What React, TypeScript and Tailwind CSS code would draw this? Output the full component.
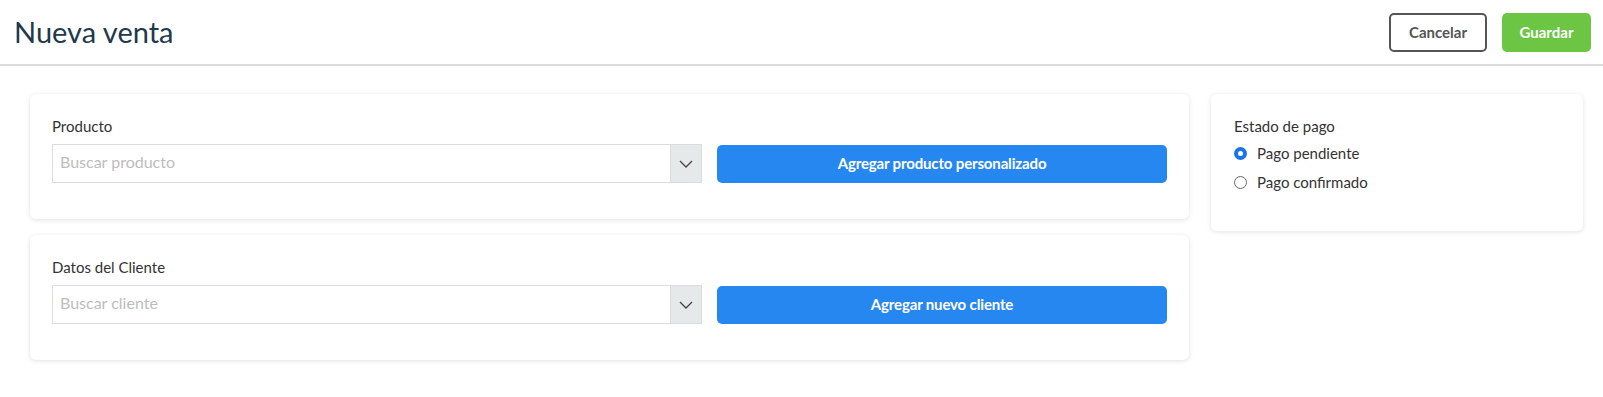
import { type ReactNode } from 'react'

function Card({ children, className = '' }: { children: ReactNode; className?: string }) {
  return (
    <div className={`bg-white rounded-md shadow-[0_1px_5px_rgba(0,0,0,0.12)] ${className}`}>
      {children}
    </div>
  )
}

// Buscador con flecha a la derecha (estilo select)
function SearchSelect({ placeholder }: { placeholder: string }) {
  return (
    <div className="flex h-[39px] border border-[#dcdcdc] bg-white">
      <div className="flex-1 flex items-center pl-[7px] pb-[3px] text-[16px] text-[#bdbdbd]">{placeholder}</div>
      <div className="w-[31px] flex items-center justify-center bg-[#e6e9e9] border-l border-[#dcdcdc]">
        <svg width="14" height="8" viewBox="0 0 14 8" fill="none" aria-hidden="true">
          <path d="M1 1l6 6 6-6" stroke="#444" strokeWidth="1.3" />
        </svg>
      </div>
    </div>
  )
}

function FieldRow({ label, placeholder, action }: { label: string; placeholder: string; action: string }) {
  return (
    <Card className="pt-[23px] pb-[36px] px-[22px]">
      <div className="text-[15px] leading-[18px] text-[#333]">{label}</div>
      <div className="mt-[9px] grid grid-cols-[650px_1fr] gap-[15px] items-center">
        <SearchSelect placeholder={placeholder} />
        <button
          type="button"
          className="h-[38px] rounded-[5px] bg-[#2787f0] text-white text-[15px] font-bold tracking-[-0.01em]"
        >
          {action}
        </button>
      </div>
    </Card>
  )
}

function Radio({ checked, label }: { checked?: boolean; label: string }) {
  return (
    <label className="flex items-center gap-[10px] h-[29px] text-[15px] text-[#333]">
      {checked ? (
        <span className="w-[13px] h-[13px] rounded-full bg-[#1a73e8] flex items-center justify-center">
          <span className="w-[5px] h-[5px] rounded-full bg-white" />
        </span>
      ) : (
        <span className="w-[13px] h-[13px] rounded-full border border-[#666] bg-white" />
      )}
      {label}
    </label>
  )
}

export default function App() {
  return (
    <div className="min-h-[397px] bg-white font-['Lato',sans-serif]">
      {/* Cabecera */}
      <div className="h-[66px] flex items-center justify-between pl-[14px] pr-[12px] border-b-2 border-[#dcdcdc]">
        <h1 className="text-[29px] text-[#1e3a4c] leading-none -mt-[2px]">Nueva venta</h1>
        <div className="flex gap-[15px]">
          <button
            type="button"
            className="w-[98px] h-[39px] rounded-[5px] border-2 border-[#555] text-[15px] font-bold text-[#555] bg-white"
          >
            Cancelar
          </button>
          <button
            type="button"
            className="w-[89px] h-[39px] rounded-[5px] bg-[#6cc644] text-[15px] font-bold text-white"
          >
            Guardar
          </button>
        </div>
      </div>

      {/* Contenido */}
      <div className="flex items-start gap-[22px] pt-[28px] pl-[30px] pr-[20px]">
        <div className="flex-1 flex flex-col gap-[16px]">
          <FieldRow label="Producto" placeholder="Buscar producto" action="Agregar producto personalizado" />
          <FieldRow label="Datos del Cliente" placeholder="Buscar cliente" action="Agregar nuevo cliente" />
        </div>
        <Card className="w-[372px] pt-[23px] pb-[34px] px-[23px]">
          <div className="text-[15px] leading-[18px] text-[#333] mb-[4px]">Estado de pago</div>
          <Radio checked label="Pago pendiente" />
          <Radio label="Pago confirmado" />
        </Card>
      </div>
    </div>
  )
}
